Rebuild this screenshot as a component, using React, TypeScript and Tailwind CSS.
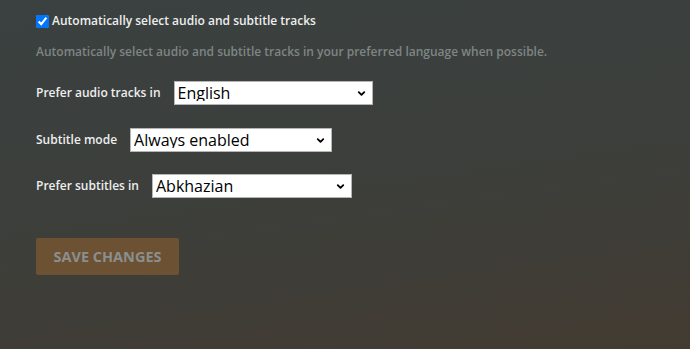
import { ChevronDown } from "lucide-react";

const font = { fontFamily: '"Open Sans", "Noto Sans", sans-serif' };

function Picker({ label, value, options, width }: { label: string; value: string; options: string[]; width: string }) {
  return (
    <div className="flex items-center h-[24px]">
      <span className="text-[12px] font-semibold text-[#eeeeee] mr-[13px]">{label}</span>
      <div className={`relative h-[24px] ${width}`}>
        <select
          defaultValue={value}
          className="appearance-none w-full h-full bg-white text-black text-[16px] font-medium pl-[3px] pr-6 border border-[#b5b5b5] rounded-none outline-none leading-none"
          style={font}
        >
          {options.map((o) => (
            <option key={o}>{o}</option>
          ))}
        </select>
        <ChevronDown className="absolute right-[6px] top-[7px] w-[11px] h-[11px] text-black pointer-events-none" strokeWidth={4} />
      </div>
    </div>
  );
}

export default function App() {
  return (
    <main
      className="w-[690px] h-[349px] overflow-hidden bg-[linear-gradient(172deg,#3a4140_0%,#3c3f3c_45%,#3f3d37_75%,#433b31_100%)] px-[36px] pt-[12px]"
      style={font}
    >
      {/* Auto select toggle */}
      <label className="flex items-center h-[18px]">
        <input type="checkbox" defaultChecked className="w-[13px] h-[13px] m-0 mr-[3px] accent-[#0075ff]" />
        <span className="text-[12px] font-semibold text-[#eeeeee]">Automatically select audio and subtitle tracks</span>
      </label>
      <p className="mt-[13px] text-[12px] font-semibold text-[#7f8584] leading-[18px]">
        Automatically select audio and subtitle tracks in your preferred language when possible.
      </p>

      <div className="mt-[20px] flex flex-col gap-[22.5px]">
        <Picker label="Prefer audio tracks in" value="English" options={["English", "French", "German", "Spanish"]} width="w-[199px]" />
        <Picker label="Subtitle mode" value="Always enabled" options={["Manually selected", "Shown with foreign audio", "Always enabled"]} width="w-[202px]" />
        <Picker label="Prefer subtitles in" value="Abkhazian" options={["Abkhazian", "Afar", "Afrikaans", "English"]} width="w-[200px]" />
      </div>

      <button
        disabled
        className="mt-[40px] w-[143px] h-[37px] rounded-[2px] bg-[#6c5232] text-[14.5px] font-bold uppercase text-[#8a8f8f]"
      >
        Save Changes
      </button>
    </main>
  );
}
